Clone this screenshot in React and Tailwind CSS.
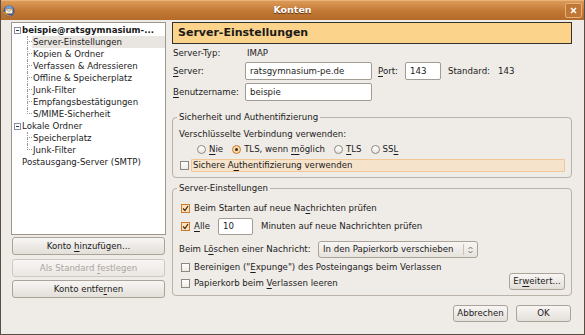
const U = ({ children }) => <span className="underline underline-offset-[1.5px] decoration-[1px]">{children}</span>;

const treeRows = [
    { kind: 'root', label: 'beispie@ratsgymnasium-...', bold: true },
    { kind: 'child', label: 'Server-Einstellungen', selected: true },
    { kind: 'child', label: 'Kopien & Ordner' },
    { kind: 'child', label: 'Verfassen & Adressieren' },
    { kind: 'child', label: 'Offline & Speicherplatz' },
    { kind: 'child', label: 'Junk-Filter' },
    { kind: 'child', label: 'Empfangsbestätigungen' },
    { kind: 'child', label: 'S/MIME-Sicherheit', last: true },
    { kind: 'root', label: 'Lokale Ordner' },
    { kind: 'child', label: 'Speicherplatz' },
    { kind: 'child', label: 'Junk-Filter', last: true },
    { kind: 'leaf', label: 'Postausgang-Server (SMTP)' },
];

const Expander = () => (
    <div className="w-[7px] h-[7px] border border-[#8390a8] bg-white flex items-center justify-center">
        <div className="w-[3px] h-[1px] bg-[#2a3550]" />
    </div>
);

const TreeRow = ({ row }) => {
    if (row.kind === 'root') {
        return (
            <div className="h-[12px] flex items-center pl-[2px] gap-[1px] whitespace-nowrap">
                <Expander />
                <span className={row.bold ? 'font-bold' : ''}>{row.label}</span>
            </div>
        );
    }
    if (row.kind === 'leaf') {
        return <div className="h-[12px] flex items-center pl-[10px] whitespace-nowrap">{row.label}</div>;
    }
    return (
        <div className="h-[12px] flex pl-[15px] whitespace-nowrap">
            <div className="w-[5px] h-full flex flex-col">
                <div className="h-[6px] border-l border-b border-dotted border-[#a09a94]" />
                <div className={row.last ? 'h-[6px]' : 'h-[6px] border-l border-dotted border-[#a09a94]'} />
            </div>
            <div className={row.selected ? 'flex-1 flex items-center pl-[1px] bg-[#e9e5e0]' : 'flex-1 flex items-center pl-[1px]'}>
                {row.label}
            </div>
        </div>
    );
};

const Button = ({ children, className = '', disabled }) => (
    <div
        className={`flex items-center justify-center rounded-[3px] border border-[#aaa39a] bg-gradient-to-b from-[#f8f6f4] to-[#e3dfd9] ${disabled ? 'text-[#aba59f] border-[#cdc8c1] from-[#f2efec] to-[#ebe7e3]' : ''} ${className}`}
    >
        <span className="whitespace-nowrap">{children}</span>
    </div>
);

const Checkbox = ({ checked }) =>
    checked ? (
        <div className="w-[9px] h-[9px] border border-[#c97b30] bg-[#fde2bd] flex items-center justify-center shrink-0">
            <svg width="7" height="7" viewBox="0 0 7 7">
                <path d="M1 3.5 L3 5.5 L6 1" stroke="#4a2e12" strokeWidth="1.3" fill="none" />
            </svg>
        </div>
    ) : (
        <div className="w-[9px] h-[9px] border border-[#8e8881] bg-gradient-to-b from-[#ffffff] to-[#eeebe7] shrink-0" />
    );

const Radio = ({ checked }) =>
    checked ? (
        <div className="w-[9px] h-[9px] rounded-full border border-[#c47a33] bg-[#fcd9a8] flex items-center justify-center shrink-0">
            <div className="w-[3px] h-[3px] rounded-full bg-[#3d2a18]" />
        </div>
    ) : (
        <div className="w-[9px] h-[9px] rounded-full border border-[#8e8881] bg-gradient-to-b from-[#ffffff] to-[#ebe7e2] shrink-0" />
    );

const Input = ({ value, className = '' }) => (
    <div className={`h-full bg-white border border-[#a29c94] rounded-[2px] flex items-center pl-[4px] ${className}`}>{value}</div>
);

const AppIcon = () => (
    <svg width="12" height="12" viewBox="0 0 12 12">
        <circle cx="6" cy="6" r="5.5" fill="#2f5fa8" />
        <circle cx="6" cy="5" r="4" fill="#6fa0e0" />
        <rect x="2.5" y="4" width="7" height="4.5" fill="#f3f0e6" stroke="#b07a30" strokeWidth="0.6" />
        <path d="M2.5 4 L6 6.6 L9.5 4" stroke="#b07a30" strokeWidth="0.6" fill="none" />
        <path d="M1 7 Q3 11 8 11" stroke="#e08a20" strokeWidth="1.2" fill="none" />
    </svg>
);

export default function App() {
    return (
        <div className="w-[585px] h-[335px] flex flex-col bg-[#efebe7] border-x border-b border-[#5a4e44] font-['DejaVu_Sans',sans-serif] text-[8.6px] text-[#1b1b1b] overflow-hidden">
            <div className="h-[20px] shrink-0 grid grid-cols-[1fr_auto_1fr] items-center bg-gradient-to-b from-[#dc9b58] via-[#c47a36] to-[#b46a28] border-t border-[#e9b37a]">
                <div className="pl-[2px] flex items-center"><AppIcon /></div>
                <div className="text-white font-bold text-[9.5px] [text-shadow:0_1px_1px_#5a3010]">Konten</div>
                <div className="flex justify-end pr-[2px]">
                    <div className="w-[17px] h-[15px] rounded-[2px] border border-[#e6b07a] bg-[#c07634] flex items-center justify-center">
                        <svg width="7" height="7" viewBox="0 0 7 7">
                            <path d="M1 1 L6 6 M6 1 L1 6" stroke="#fff" strokeWidth="1.6" />
                        </svg>
                    </div>
                </div>
            </div>

            <div className="flex-1 flex pl-[10px] pt-[2px] gap-[6px]">
                <div className="w-[155px] flex flex-col">
                    <div className="h-[213px] bg-white border border-[#9e978e] pt-[1px] overflow-hidden">
                        {treeRows.map((row, i) => (
                            <TreeRow key={i} row={row} />
                        ))}
                    </div>
                    <Button className="mt-[2px] h-[18px] ml-[1px] w-[153px]">Konto <U>h</U>inzufügen...</Button>
                    <Button disabled className="mt-[4px] h-[18px] ml-[1px] w-[153px]">Als Standard <U>f</U>estlegen</Button>
                    <Button className="mt-[3px] h-[18px] ml-[1px] w-[153px]">Konto entfe<U>r</U>nen</Button>
                </div>

                <div className="w-[400px] flex flex-col">
                    <div className="h-[22px] bg-[#fbd38a] border border-[#37312b] flex items-center pl-[5px] text-[11px] font-bold">
                        Server-Einstellungen
                    </div>

                    <div className="mt-[3px] h-[12px] flex items-center">
                        <span className="w-[75px] pl-[1px]">Server-Typ:</span>
                        <span>IMAP</span>
                    </div>

                    <div className="mt-[3px] h-[18px] flex items-center">
                        <span className="w-[73px] pl-[1px]"><U>S</U>erver:</span>
                        <Input value="ratsgymnasium-pe.de" className="w-[127px]" />
                        <span className="w-[27px] ml-[6px]"><U>P</U>ort:</span>
                        <Input value="143" className="w-[36px]" />
                        <span className="w-[50px] ml-[7px]">Standard:</span>
                        <span>143</span>
                    </div>

                    <div className="mt-[3px] h-[18px] flex items-center">
                        <span className="w-[73px] pl-[1px]"><U>B</U>enutzername:</span>
                        <Input value="beispie" className="w-[127px]" />
                    </div>

                    <fieldset className="mt-[10px] border border-[#bab2a8] rounded-[4px] px-[6px] pb-[5px]">
                        <legend className="ml-[-2px] px-[2px] leading-[12px]">Sicherheit und Authentifizierung</legend>
                        <div className="mt-[5px] h-[12px] flex items-center">Verschlüsselte Verbindung verwenden:</div>
                        <div className="mt-[3px] h-[12px] flex items-center pl-[18px] gap-[9px]">
                            <div className="flex items-center gap-[3px]"><Radio /><span><U>N</U>ie</span></div>
                            <div className="flex items-center gap-[3px]"><Radio checked /><span>TLS, wenn <U>m</U>öglich</span></div>
                            <div className="flex items-center gap-[3px]"><Radio /><span><U>T</U>LS</span></div>
                            <div className="flex items-center gap-[3px]"><Radio /><span>SS<U>L</U></span></div>
                        </div>
                        <div className="mt-[4px] h-[13px] flex items-center">
                            <div className="ml-[1px]"><Checkbox /></div>
                            <div className="ml-[2px] flex-1 h-full flex items-center pl-[1px] bg-[#f6e3cc] border border-[#f1c895] rounded-[1px]">
                                <span>Sichere A<U>u</U>thentifizierung verwenden</span>
                            </div>
                        </div>
                    </fieldset>

                    <fieldset className="mt-[4px] border border-[#bab2a8] rounded-[4px] px-[6px] pb-[5px]">
                        <legend className="ml-[-2px] px-[2px] leading-[12px]">Server-Einstellungen</legend>
                        <div className="mt-[8px] h-[12px] flex items-center gap-[4px] pl-[2px]">
                            <Checkbox checked />
                            <span>Beim Starten auf neue Na<U>c</U>hrichten prüfen</span>
                        </div>
                        <div className="mt-[4px] h-[17px] flex items-center pl-[2px]">
                            <Checkbox checked />
                            <span className="ml-[4px] w-[24px]"><U>A</U>lle</span>
                            <Input value="10" className="w-[35px]" />
                            <span className="ml-[8px]">Minuten auf neue Nachrichten prüfen</span>
                        </div>
                        <div className="mt-[6px] h-[17px] flex items-center">
                            <span className="w-[139px]">Beim L<U>ö</U>schen einer Nachricht:</span>
                            <div className="w-[160px] h-full rounded-[3px] border border-[#aaa39a] bg-gradient-to-b from-[#f8f6f4] to-[#e6e2dc] flex items-center">
                                <span className="flex-1 pl-[4px]">In den Papierkorb verschieben</span>
                                <div className="w-[1px] h-[11px] bg-[#c9c3bb]" />
                                <div className="w-[13px] flex justify-center">
                                    <svg width="5" height="8" viewBox="0 0 5 8">
                                        <path d="M0.5 3 L2.5 1 L4.5 3 M0.5 5 L2.5 7 L4.5 5" stroke="#5a554f" strokeWidth="0.8" fill="none" />
                                    </svg>
                                </div>
                            </div>
                        </div>
                        <div className="mt-[3px] h-[12px] flex items-center gap-[4px] pl-[2px]">
                            <Checkbox />
                            <span>Bereinigen ("<U>E</U>xpunge") des Posteingangs beim Verlassen</span>
                        </div>
                        <div className="h-[17px] flex items-start justify-between pl-[2px]">
                            <div className="mt-[4px] h-[12px] flex items-center gap-[4px]">
                                <Checkbox />
                                <span>Papierkorb beim <U>V</U>erlassen leeren</span>
                            </div>
                            <Button className="w-[56px] h-[17px]">Er<U>w</U>eitert...</Button>
                        </div>
                    </fieldset>

                    <div className="mt-[9px] flex justify-end gap-[8px] pr-[1px]">
                        <Button className="w-[55px] h-[17px]">Abbrechen</Button>
                        <Button className="w-[55px] h-[17px]">OK</Button>
                    </div>
                </div>
            </div>
        </div>
    );
}
